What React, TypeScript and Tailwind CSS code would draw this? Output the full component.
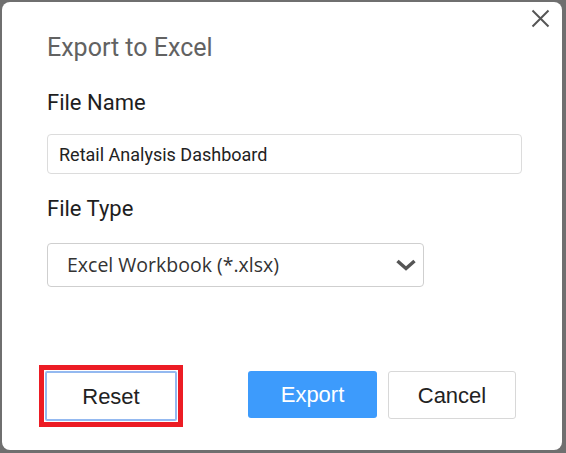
import React from "react";

export default function App() {
  return (
    <div className="w-[566px] h-[453px] bg-[#6f6f6f] pt-[2px] pl-[2px] overflow-hidden">
      <div className="relative w-[560px] h-[448px] bg-white rounded-[8px] pt-[32px] pl-[45px] flex flex-col">
        <svg
          className="absolute top-[7px] right-[12px]"
          width="19"
          height="19"
          viewBox="0 0 19 19"
          fill="none"
        >
          <path d="M1.5 1.5 L17.5 17.5 M17.5 1.5 L1.5 17.5" stroke="#555555" strokeWidth="2" />
        </svg>
        <div
          className="text-[25px] leading-[28px] text-[#626262]"
          style={{ fontFamily: "Roboto, sans-serif" }}
        >
          Export to Excel
        </div>
        <div
          className="mt-[29px] text-[22px] leading-[24px] text-[#1e1e1e]"
          style={{ fontFamily: "Roboto, sans-serif" }}
        >
          File Name
        </div>
        <div
          className="mt-[19px] w-[475px] h-[40px] border border-[#dcdcdc] rounded-[4px] flex items-center pl-[11px] text-[18px] text-[#222222]"
          style={{ fontFamily: "Roboto, sans-serif" }}
        >
          Retail Analysis Dashboard
        </div>
        <div
          className="mt-[23px] text-[22px] leading-[24px] text-[#1e1e1e]"
          style={{ fontFamily: "Roboto, sans-serif" }}
        >
          File Type
        </div>
        <div
          className="mt-[22px] w-[377px] h-[44px] border border-[#cfcfcf] rounded-[4px] flex items-center justify-between pl-[19px] pr-[6px] text-[19.5px] text-[#333333]"
          style={{ fontFamily: "'Open Sans', sans-serif" }}
        >
          <span>Excel Workbook (*.xlsx)</span>
          <svg width="22" height="14" viewBox="0 0 22 14" fill="none">
            <path d="M2.5 3 L11 10.5 L19.5 3" stroke="#555555" strokeWidth="3.5" strokeLinejoin="miter" />
          </svg>
        </div>
        <div
          className="mt-[78px] -ml-[8px] flex items-start"
          style={{ fontFamily: "'Liberation Sans', Arial, sans-serif" }}
        >
          <div className="border-[5px] border-[#ec1c24] p-[1px]">
            <button className="w-[132px] h-[50px] border-2 border-[#94b9f0] rounded-[2px] bg-white text-[22px] text-[#222222] flex items-center justify-center">
              Reset
            </button>
          </div>
          <button className="ml-[65px] mt-[6px] w-[129px] h-[47px] rounded-[3px] bg-[#3d9bfc] text-white text-[22px] flex items-center justify-center">
            Export
          </button>
          <button className="ml-[11px] mt-[6px] w-[128px] h-[48px] rounded-[3px] border border-[#d8d8d8] bg-white text-[22px] text-[#222222] flex items-center justify-center">
            Cancel
          </button>
        </div>
      </div>
    </div>
  );
}
